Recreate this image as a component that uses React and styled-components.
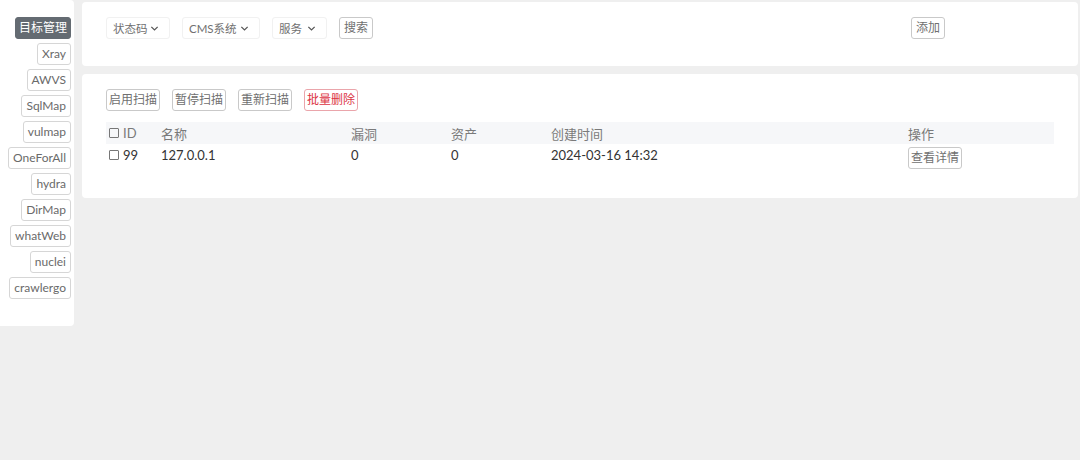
import React from 'react';
import styled, { createGlobalStyle } from 'styled-components';

const GlobalStyle = createGlobalStyle`
  html, body {
    margin: 0;
    padding: 0;
    background: #efefef;
  }
  body {
    font-family: Lato, "Noto Sans CJK SC", sans-serif;
    color: #333;
  }
`;

const Page = styled.div`
  display: flex;
  align-items: flex-start;
  gap: 8px;
  width: 1080px;
  min-height: 460px;
  box-sizing: border-box;
  padding-right: 2px;
`;

const Sidebar = styled.div`
  width: 74px;
  height: 326px;
  box-sizing: border-box;
  background: #fff;
  border-radius: 0 4px 4px 0;
  padding: 17px 3px 0 0;
  display: flex;
  flex-direction: column;
  align-items: flex-end;
  gap: 4px;
`;

const SideButton = styled.button`
  height: 22px;
  box-sizing: border-box;
  padding: 0 ${(p) => (p.$active ? 3 : 4)}px;
  font-family: inherit;
  font-size: 12px;
  line-height: 20px;
  border-radius: 3px;
  border: 1px solid ${(p) => (p.$active ? '#646b72' : '#d6d6d6')};
  background: ${(p) => (p.$active ? '#646b72' : '#fff')};
  color: ${(p) => (p.$active ? '#fff' : '#6a6a6a')};
  cursor: pointer;
`;

const Main = styled.div`
  flex: 1;
  display: flex;
  flex-direction: column;
  gap: 8px;
  padding-top: 2px;
`;

const Panel = styled.div`
  background: #fff;
  border-radius: 4px;
  box-sizing: border-box;
  padding: 15px 24px ${(p) => p.$bottom || 27}px 24px;
`;

const Toolbar = styled.div`
  display: flex;
  align-items: center;
  gap: ${(p) => p.$gap || 12}px;
`;

const Spacer = styled.div`
  flex: 1;
`;

const Select = styled.div`
  display: flex;
  align-items: center;
  justify-content: space-between;
  height: 22px;
  box-sizing: border-box;
  width: ${(p) => p.$w}px;
  padding: 0 10px 0 6px;
  border: 1px solid #f1f1f1;
  border-radius: 3px;
  font-size: 11.5px;
  color: #707070;
`;

const Button = styled.button`
  height: 22px;
  box-sizing: border-box;
  padding: 0 ${(p) => p.$pad || 2}px;
  font-family: inherit;
  font-size: 12px;
  line-height: 20px;
  border-radius: 3px;
  border: 1px solid ${(p) => (p.$danger ? '#eaa5ab' : '#c9c9c9')};
  background: #fff;
  color: ${(p) => (p.$danger ? '#dc3545' : '#707070')};
  cursor: pointer;
`;

const AddButton = styled(Button)`
  margin-right: 109px;
`;

const Table = styled.table`
  width: 100%;
  table-layout: fixed;
  margin-top: 11px;
  border-collapse: collapse;
  font-size: 13px;
`;

const Th = styled.th`
  box-sizing: border-box;
  text-align: left;
  font-weight: 400;
  color: #7a7a7a;
  background: #f6f7f9;
  height: 22px;
  padding: 0 0 0 3px;
  width: ${(p) => (p.$w ? `${p.$w}px` : 'auto')};
`;

const Td = styled.td`
  color: #333;
  line-height: 17px;
  padding: 3px 0 0 3px;
  vertical-align: top;
`;

const Box = styled.span`
  display: inline-block;
  width: 8px;
  height: 8px;
  border: 1px solid #777;
  border-radius: 1px;
  margin-right: 4px;
`;

const Chevron = () => (
  <svg width="9" height="9" viewBox="0 0 10 10">
    <path d="M1.5 3.2 L5 6.6 L8.5 3.2" fill="none" stroke="#555" strokeWidth="1.4" />
  </svg>
);

const tools = ['Xray', 'AWVS', 'SqlMap', 'vulmap', 'OneForAll', 'hydra', 'DirMap', 'whatWeb', 'nuclei', 'crawlergo'];

export default function App() {
  return (
    <>
      <GlobalStyle />
      <Page>
        <Sidebar>
          <SideButton $active>目标管理</SideButton>
          {tools.map((t) => (
            <SideButton key={t}>{t}</SideButton>
          ))}
        </Sidebar>
        <Main>
          <Panel>
            <Toolbar>
              <Select $w={64}>状态码 <Chevron /></Select>
              <Select $w={78}>CMS系统 <Chevron /></Select>
              <Select $w={55}>服务 <Chevron /></Select>
              <Button $pad={4}>搜索</Button>
              <Spacer />
              <AddButton $pad={4}>添加</AddButton>
            </Toolbar>
          </Panel>
          <Panel $bottom={29}>
            <Toolbar $gap={12}>
              <Button>启用扫描</Button>
              <Button>暂停扫描</Button>
              <Button>重新扫描</Button>
              <Button $danger>批量删除</Button>
            </Toolbar>
            <Table>
              <thead>
                <tr>
                  <Th $w={52}><Box />ID</Th>
                  <Th $w={190}>名称</Th>
                  <Th $w={100}>漏洞</Th>
                  <Th $w={100}>资产</Th>
                  <Th $w={357}>创建时间</Th>
                  <Th>操作</Th>
                </tr>
              </thead>
              <tbody>
                <tr>
                  <Td><Box />99</Td>
                  <Td>127.0.0.1</Td>
                  <Td>0</Td>
                  <Td>0</Td>
                  <Td>2024-03-16 14:32</Td>
                  <Td><Button>查看详情</Button></Td>
                </tr>
              </tbody>
            </Table>
          </Panel>
        </Main>
      </Page>
    </>
  );
}
